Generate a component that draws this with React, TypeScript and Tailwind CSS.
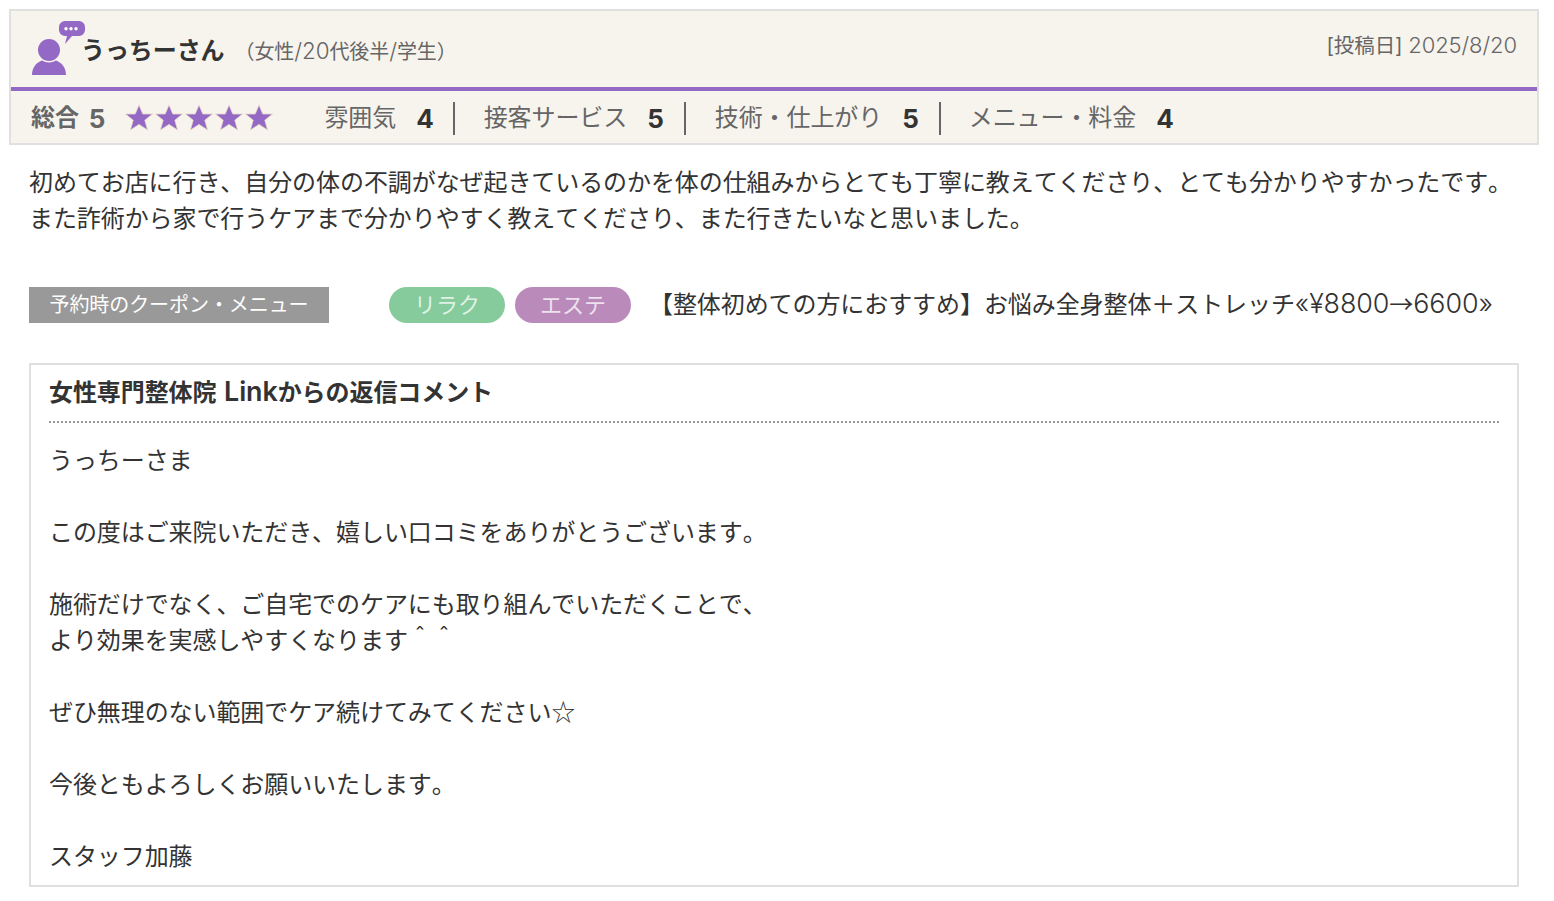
const font = "font-['Inter','Noto_Sans_CJK_JP',sans-serif] [font-kerning:none]";
const cjk = "font-['Noto_Sans_CJK_JP',sans-serif]";

function UserIcon() {
  return (
    <svg width="56" height="56" viewBox="0 0 56 56" className="shrink-0" aria-hidden="true">
      <path fill="#9468c5" d="M34 1 h14 a6 6 0 0 1 6 6 v3 a6 6 0 0 1 -6 6 h-7 l-7 8 l2 -8 h-2 a6 6 0 0 1 -6 -6 v-3 a6 6 0 0 1 6 -6 z" />
      <g fill="#fff">
        <circle cx="35" cy="8.800" r="1.700" />
        <circle cx="40" cy="8.800" r="1.700" />
        <circle cx="45" cy="8.800" r="1.700" />
      </g>
      <circle cx="18" cy="30" r="11" fill="#9468c5" />
      <path fill="#9468c5" d="M1 55 c0-7 4-12.500 10-14.500 c4 2.500 10 2.500 14 0 c6 2 10 7.500 10 14.500 z" />
    </svg>
  );
}

function Star() {
  return (
    <svg width="30" height="30" viewBox="0 0 30 30" aria-hidden="true" className="blur-[0.6px]">
      <path fill="#9468c5" stroke="#e9d9c4" strokeWidth="0.800" d="M15 2 l3.800 9 h9.700 l-7.700 6.200 l2.800 9.800 l-8.600 -5.600 l-8.600 5.600 l2.800 -9.800 l-7.700 -6.200 h9.700 z" />
    </svg>
  );
}

function Score({ label, value, divider, className }: { label: string; value: number; divider?: boolean; className: string }) {
  return (
    <div className={`flex items-center h-[33px] ${className} ${divider ? "border-r-2 border-[#666]" : ""}`}>
      <span className="text-[24px] text-[#666]">{label}</span>
      <span className="ml-[20px] text-[26px] font-bold text-[#333]">{value}</span>
    </div>
  );
}

function Lat({ children }: { children: React.ReactNode }) {
  return <span className="text-[1.12em] font-light">{children}</span>;
}

const replyLines: string[] = [
  "うっちーさま",
  "",
  "この度はご来院いただき、嬉しい口コミをありがとうございます。",
  "",
  "施術だけでなく、ご自宅でのケアにも取り組んでいただくことで、",
  "より効果を実感しやすくなります＾＾",
  "",
  "ぜひ無理のない範囲でケア続けてみてください☆",
  "",
  "今後ともよろしくお願いいたします。",
  "",
  "スタッフ加藤",
];

export default function App() {
  return (
    <div className={`${font} bg-white min-h-[901px] pt-[9px] pl-[9px] pr-[15px] text-[#333] tracking-[-0.08px]`}>
      <div className="border-2 border-[#e0e0e0] bg-[#f7f4ee] h-[136px]">
        <div className="flex justify-between h-[80px] border-b-4 border-[#9468c5] pl-[20px] pr-[20px]">
          <div className="flex items-start pt-[9px]">
            <UserIcon />
            <span className="ml-[-6px] mt-[13px] text-[24px] font-bold text-[#333] leading-[36px]">うっちーさん</span>
            <span className="ml-[10px] mt-[13px] text-[20px] text-[#666] leading-[36px]">（女性<Lat>/20</Lat>代後半<Lat>/</Lat>学生）</span>
          </div>
          <div className="pt-[16px] text-[20.500px] text-[#666] leading-[36px]">[投稿日] <span className="text-[22px] font-light">2025/8/20</span></div>
        </div>
        <div className="flex items-center h-[52px] pl-[20px] pt-[2px]">
          <span className="text-[24px] font-bold text-[#666]">総合</span>
          <span className="ml-[10px] text-[26px] font-bold text-[#666]">5</span>
          <div className="ml-[19px] flex items-center">
            <Star />
            <Star />
            <Star />
            <Star />
            <Star />
          </div>
          <Score label="雰囲気" value={4} divider className="ml-[50px] pr-[19px]" />
          <Score label="接客サービス" value={5} divider className="ml-[29px] pr-[20px]" />
          <Score label="技術・仕上がり" value={5} divider className="ml-[29px] pr-[20px]" />
          <Score label="メニュー・料金" value={4} className="ml-[28px]" />
        </div>
      </div>

      <div className="pl-[20px] pr-[20px]">
        <p className="mt-[20px] text-[24px] leading-[36px] text-[#333]">
          初めてお店に行き、自分の体の不調がなぜ起きているのかを体の仕組みからとても丁寧に教えてくださり、とても分かりやすかったです。<br />
          また詐術から家で行うケアまで分かりやすく教えてくださり、また行きたいなと思いました。
        </p>

        <div className="mt-[50px] flex items-center h-[36px]">
          <div className="w-[300px] h-[36px] bg-[#999] text-white text-[20px] flex items-center justify-center">予約時のクーポン・メニュー</div>
          <div className="ml-[60px] w-[116px] h-[36px] rounded-[18px] bg-[#85cb9c] text-white/75 text-[22px] flex items-center justify-center">リラク</div>
          <div className="ml-[10px] w-[116px] h-[36px] rounded-[18px] bg-[#ba8abb] text-white/75 text-[22px] flex items-center justify-center">エステ</div>
          <div className="ml-[18px] h-[36px] leading-[32px] text-[24px] whitespace-nowrap text-[#333]">【整体初めての方におすすめ】お悩み全身整体＋ストレッチ<Lat>«¥8800</Lat><span className={cjk}>→</span><Lat>6600»</Lat></div>
        </div>

        <div className="mt-[40px] border-2 border-[#e0e0e0] px-[18px] h-[524px]">
          <h2 className="h-[58px] border-b-2 border-dotted border-[#999] text-[24px] font-bold leading-[53px] text-[#333]">女性専門整体院 <span className="ml-[2px] text-[1.12em] font-semibold">Link</span>からの返信コメント</h2>
          <div className="mt-[20px] text-[24px] leading-[36px] text-[#333]">
            {replyLines.map((l, i) => (
              <div key={i} className={l.endsWith("☆") ? `h-[36px] leading-[32px] ${cjk}` : "h-[36px]"}>{l}</div>
            ))}
          </div>
        </div>
      </div>
    </div>
  );
}
